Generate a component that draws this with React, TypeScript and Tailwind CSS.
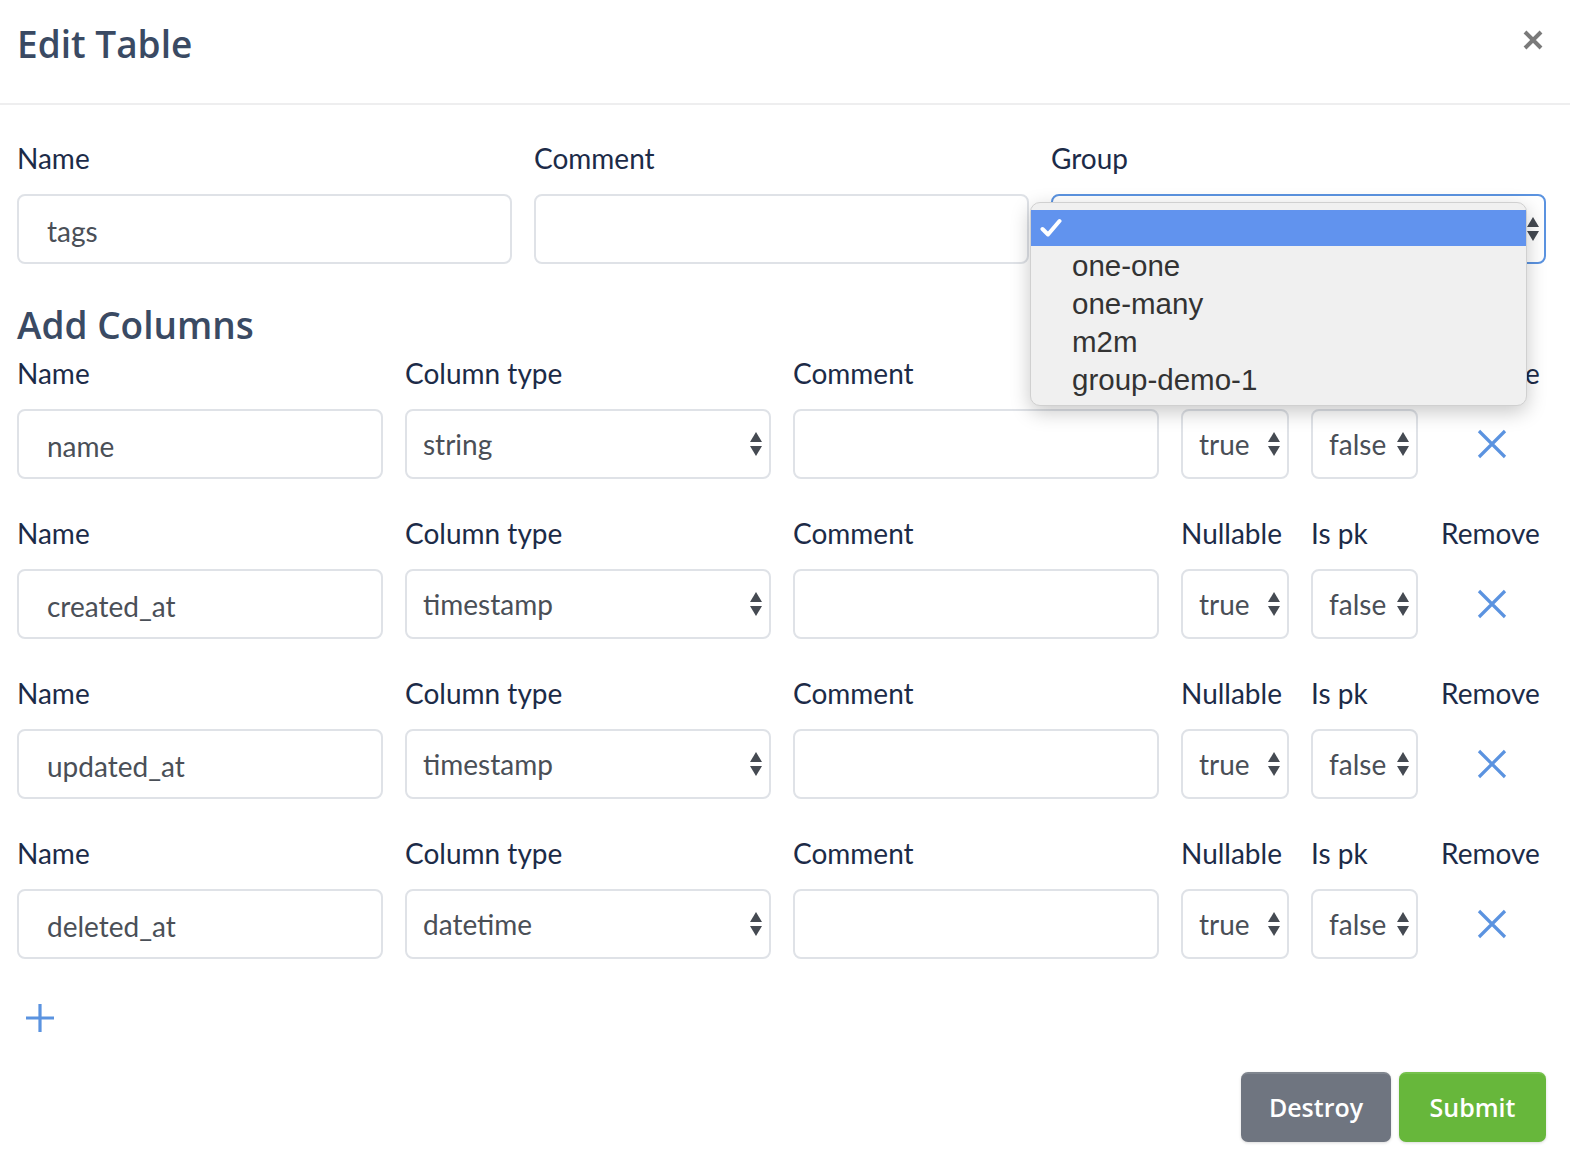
import React from "react";

const labelCls = "text-[28px] leading-none text-[#1c2b48] font-['Lato',sans-serif]";
const inputCls =
  "h-[70px] w-full rounded-[8px] border-2 border-[#dfe2e7] bg-white flex items-center text-[28px] text-[#4a4f57] font-['Lato',sans-serif]";

function Arrows() {
  return (
    <svg width="14" height="26" viewBox="0 0 14 26" className="shrink-0">
      <polygon points="7,1 13,11 1,11" fill="#454a52" />
      <polygon points="1,15 13,15 7,25" fill="#454a52" />
    </svg>
  );
}

function TextInput({ value }: { value: string }) {
  return (
    <div className={`${inputCls} pl-[28px] pt-[3px]`}>
      <span>{value}</span>
    </div>
  );
}

function SelectBox({ value }: { value: string }) {
  return (
    <div className={`${inputCls} pl-[16px] pr-[6px] justify-between`}>
      <span>{value}</span>
      <Arrows />
    </div>
  );
}

function XIcon() {
  return (
    <svg width="30" height="30" viewBox="0 0 30 30">
      <path d="M2 2 L28 28 M28 2 L2 28" stroke="#5b93e0" strokeWidth="3.2" />
    </svg>
  );
}

function ColumnRow({ name, type }: { name: string; type: string }) {
  return (
    <div className="grid grid-cols-[366px_366px_366px_108px_107px_1fr] gap-x-[22px]">
      <div className={`${labelCls} h-[50px]`}>Name</div>
      <div className={`${labelCls} h-[50px]`}>Column type</div>
      <div className={`${labelCls} h-[50px]`}>Comment</div>
      <div className={`${labelCls} h-[50px]`}>Nullable</div>
      <div className={`${labelCls} h-[50px]`}>Is pk</div>
      <div className={`${labelCls} h-[50px] pl-[1px]`}>Remove</div>
      <TextInput value={name} />
      <SelectBox value={type} />
      <TextInput value="" />
      <SelectBox value="true" />
      <SelectBox value="false" />
      <div className="h-[70px] flex items-center pl-[37px]">
        <XIcon />
      </div>
    </div>
  );
}

export default function App() {
  return (
    <div className="w-[1570px] h-[1176px] bg-white relative overflow-hidden">
      {/* Header */}
      <div className="h-[105px] border-b-2 border-[#eeeeef] flex items-start justify-between pl-[17px] pr-[24px]">
        <h1 className="mt-[21px] text-[37px] leading-[46px] font-semibold text-[#3a4a63] font-['Open_Sans',sans-serif]">
          Edit Table
        </h1>
        <svg width="22" height="22" viewBox="0 0 22 22" className="mt-[29px] mr-[2px]">
          <path d="M3 3 L19 19 M19 3 L3 19" stroke="#7a7a7a" strokeWidth="4" />
        </svg>
      </div>

      <div className="pl-[17px] pr-[24px]">
        {/* Top row */}
        <div className="grid grid-cols-3 gap-x-[22px] mt-[39px]">
          <div className={`${labelCls} h-[50px]`}>Name</div>
          <div className={`${labelCls} h-[50px]`}>Comment</div>
          <div className={`${labelCls} h-[50px]`}>Group</div>
          <TextInput value="tags" />
          <TextInput value="" />
          <div className="relative">
            <div className="h-[70px] w-full rounded-[8px] border-2 border-[#5b93e0] bg-white flex items-center justify-end pr-[4px]">
              <Arrows />
            </div>
            {/* dropdown */}
            <div className="absolute left-[-21px] top-[8px] w-[497px] h-[204px] rounded-[10px] bg-[#f0f0f0] border border-[#d0d0d0] shadow-[0_6px_20px_rgba(0,0,0,0.22)] pt-[7px] font-['Liberation_Sans',sans-serif] text-[#333] z-10">
              <div className="h-[36px] bg-[#6193ee] flex items-center pl-[9px]">
                <svg width="22" height="20" viewBox="0 0 22 20">
                  <path d="M2.5 11 L8 16.5 L19.5 3" stroke="white" strokeWidth="4" fill="none" strokeLinecap="round" strokeLinejoin="round" />
                </svg>
              </div>
              <div className="pl-[41px] text-[29.5px] leading-[38px] pt-[1px]">
                <div>one-one</div>
                <div>one-many</div>
                <div>m2m</div>
                <div>group-demo-1</div>
              </div>
            </div>
          </div>
        </div>

        {/* Add Columns */}
        <h2 className="mt-[38px] text-[37px] leading-[46px] font-semibold text-[#3a4a63] font-['Open_Sans',sans-serif]">
          Add Columns
        </h2>
        <div className="mt-[11px] flex flex-col gap-y-[40px]">
          <ColumnRow name="name" type="string" />
          <ColumnRow name="created_at" type="timestamp" />
          <ColumnRow name="updated_at" type="timestamp" />
          <ColumnRow name="deleted_at" type="datetime" />
        </div>

        <div className="mt-[44px] pl-[8px] h-[30px]">
          <svg width="30" height="30" viewBox="0 0 30 30" className="block">
            <path d="M15 1 L15 29 M1 15 L29 15" stroke="#5b93e0" strokeWidth="3.2" />
          </svg>
        </div>

        <div className="flex justify-end gap-x-[8px] mt-[39px]">
          <button className="w-[150px] h-[70px] rounded-[7px] bg-[#6f7580] text-white text-[25px] font-semibold font-['Open_Sans',sans-serif] shadow-[0_1px_3px_rgba(0,0,0,0.15)] border-t-2 border-[#80868f]">
            Destroy
          </button>
          <button className="w-[147px] h-[70px] rounded-[7px] bg-[#67b73b] text-white text-[25px] font-semibold font-['Open_Sans',sans-serif] shadow-[0_1px_3px_rgba(0,0,0,0.15)] border-t-2 border-[#76c24c]">
            Submit
          </button>
        </div>
      </div>
    </div>
  );
}
